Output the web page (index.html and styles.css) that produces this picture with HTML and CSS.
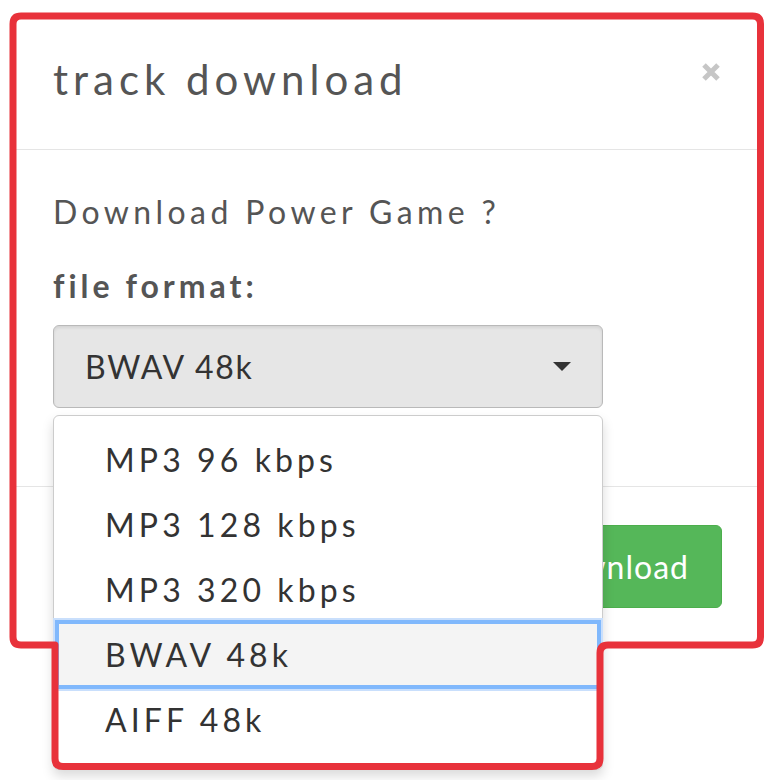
FILE: index.html
```html
<!DOCTYPE html>
<html lang="en">
<head>
    <meta charset="UTF-8">
    <meta name="viewport" content="width=device-width, initial-scale=1.0">
    <title>track download</title>
    <link rel="stylesheet" href="styles.css">
</head>
<body>
    <div class="page">
        <div class="modal">
            <div class="modal-header">
                <h4 class="modal-title">track download</h4>
                <button class="close" type="button" aria-label="Close">
                    <svg width="20" height="20" viewBox="0 0 20 20">
                        <path d="M3 3 L17 17 M17 3 L3 17" stroke="#c6c6c6" stroke-width="5" fill="none"/>
                    </svg>
                </button>
            </div>

            <div class="modal-body">
                <p class="question">Download Power Game ?</p>
                <label class="field-label">file format:</label>
                <div class="select">
                    <span>BWAV 48k</span>
                    <span class="caret"></span>
                </div>

                <ul class="dropdown">
                    <li>MP3 96 kbps</li>
                    <li>MP3 128 kbps</li>
                    <li>MP3 320 kbps</li>
                    <li class="selected">BWAV 48k</li>
                    <li>AIFF 48k</li>
                </ul>
            </div>

            <div class="modal-footer">
                <button class="btn-download" type="button">Download</button>
            </div>
        </div>

        <!-- highlight outline drawn over the modal and the open list -->
        <svg class="annotation" width="769" height="780" viewBox="0 0 769 780">
            <path d="M21 16 H752.5 Q760.5 16 760.5 24 V637 Q760.5 645 752.5 645 H608 Q600 645 600 653 V758.5 Q600 766.5 592 766.5 H63 Q55 766.5 55 758.5 V645 H21 Q13 645 13 637 V24 Q13 16 21 16 Z"
                  fill="none" stroke="#e8323b" stroke-width="7" stroke-linejoin="round"/>
        </svg>
    </div>
</body>
</html>
```

FILE: styles.css
```css
body {
    margin: 0;
    background: #fff;
    font-family: Lato, 'Noto Sans', sans-serif;
    color: #555;
}
.page {
    position: relative;
    width: 769px;
    height: 780px;
    padding: 16px 0 0 13px;
    box-sizing: border-box;
}
.modal {
    position: relative;
    width: 747px;
    height: 629px;
    background: #fff;
    border-radius: 8px;
    display: flex;
    flex-direction: column;
}
.modal-header {
    display: flex;
    justify-content: space-between;
    align-items: flex-start;
    padding: 41px 39px 48px 40px;
    border-bottom: 1px solid #e5e5e5;
}
.modal-title {
    margin: 0;
    font-size: 42px;
    font-weight: 400;
    line-height: 44px;
    letter-spacing: 5px;
    color: #555;
}
.close {
    margin-top: 5px;
    padding: 0;
    border: none;
    background: none;
    line-height: 0;
}
.modal-body {
    position: relative;
    padding: 40px 40px 78px;
    font-size: 32px;
    line-height: 44px;
}
.question {
    margin: 0 0 30px;
    letter-spacing: 4.4px;
}
.field-label {
    display: block;
    margin-bottom: 17px;
    font-weight: 700;
    letter-spacing: 4px;
}
.select {
    width: 550px;
    height: 83px;
    box-sizing: border-box;
    display: flex;
    align-items: center;
    justify-content: space-between;
    padding: 0 31px;
    border: 1px solid #b9b9b9;
    border-radius: 6px;
    background: #e6e6e6;
    box-shadow: inset 0 2px 3px rgba(0, 0, 0, 0.08);
    color: #333;
    letter-spacing: 1.8px;
}
.caret {
    width: 0;
    height: 0;
    border-left: 9px solid transparent;
    border-right: 9px solid transparent;
    border-top: 9px solid #333;
}
.dropdown {
    position: absolute;
    top: 265px;
    left: 40px;
    z-index: 2;
    width: 550px;
    height: 355px;
    box-sizing: border-box;
    margin: 0;
    padding: 11px 0;
    list-style: none;
    background: #fff;
    border: 1px solid #ccc;
    border-radius: 6px;
    box-shadow: 0 6px 12px rgba(0, 0, 0, 0.15);
}
.dropdown li {
    height: 65px;
    line-height: 65px;
    padding-left: 51px;
    color: #333;
    letter-spacing: 4.1px;
}
.dropdown li.selected {
    margin: 0 3px;
    padding-left: 48px;
    background: #f4f4f4;
    box-shadow: 0 0 0 2px #80b8fc, 0 0 0 4px #c9dffc, inset 0 0 0 2px #80b8fc;
}
.modal-footer {
    display: flex;
    justify-content: flex-end;
    padding: 38px 38px 37px;
    border-top: 1px solid #e5e5e5;
}
.btn-download {
    height: 83px;
    padding: 0 32px;
    border: 1px solid #4cae4c;
    border-radius: 6px;
    background: #55b759;
    color: #fff;
    font-family: Lato, 'Noto Sans', sans-serif;
    font-size: 32px;
    letter-spacing: 1px;
}
.annotation {
    position: absolute;
    top: 0;
    left: 0;
    z-index: 3;
    pointer-events: none;
}
```
